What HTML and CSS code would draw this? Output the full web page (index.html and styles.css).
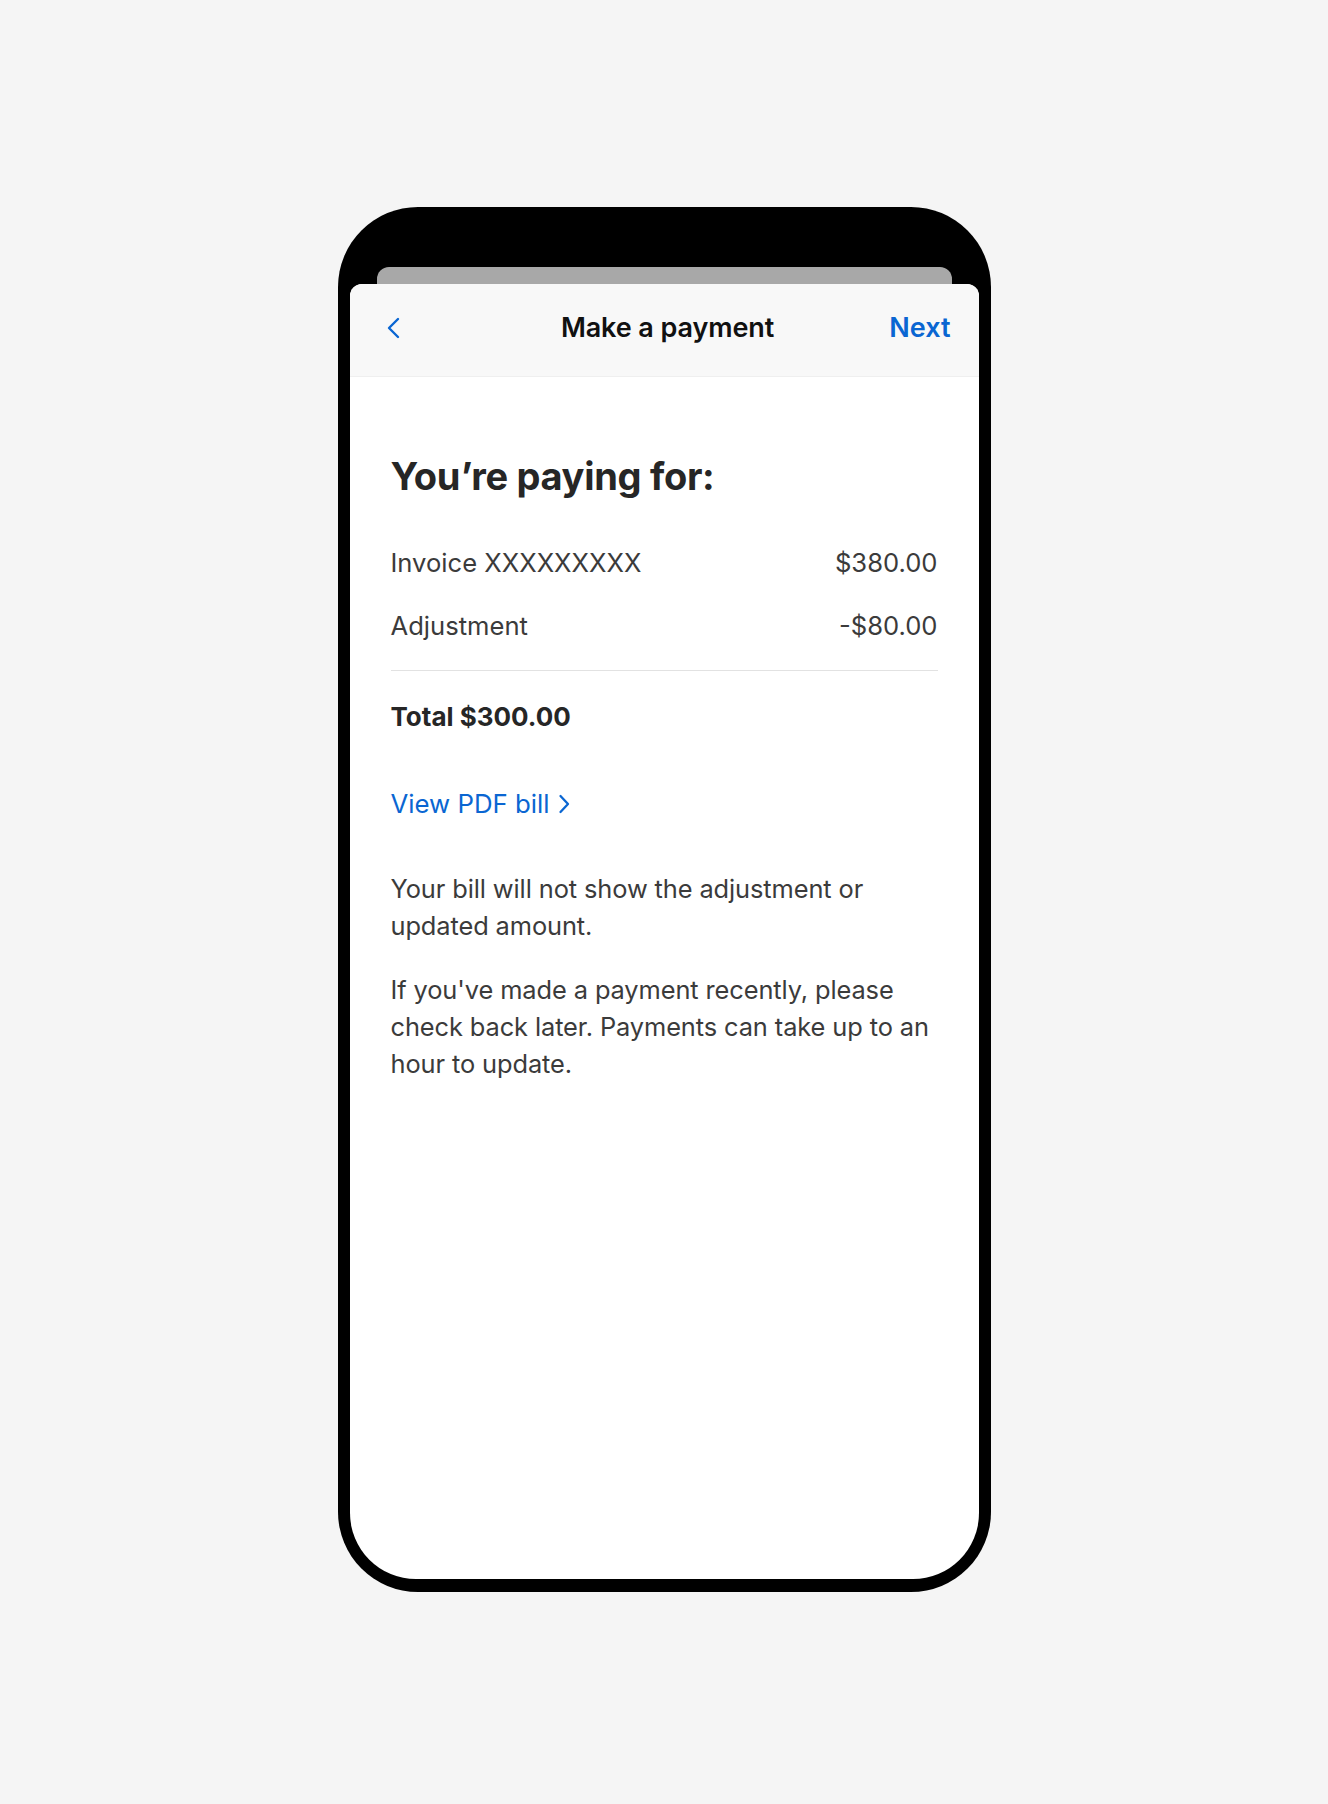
FILE: index.html
```html
<!DOCTYPE html>
<html lang="en">
<head>
<meta charset="utf-8">
<title>Make a payment</title>
<link rel="stylesheet" href="styles.css">
</head>
<body>
<div class="phone">
  <div class="under-sheet"></div>
  <div class="sheet">
    <header class="nav">
      <button class="back" aria-label="Back">
        <svg width="16" height="22" viewBox="0 0 16 22"><path d="M13 2 L4 11 L13 20" fill="none" stroke="#0a66d2" stroke-width="2.4" stroke-linecap="round" stroke-linejoin="round"/></svg>
      </button>
      <h1 class="nav-title">Make a payment</h1>
      <a class="nav-next" href="#">Next</a>
    </header>
    <main class="content">
      <h2 class="heading">You’re paying for:</h2>
      <div class="row"><span>Invoice XXXXXXXXX</span><span>$380.00</span></div>
      <div class="row row-second"><span>Adjustment</span><span>-$80.00</span></div>
      <hr class="divider">
      <div class="total">Total $300.00</div>
      <a class="pdf-link" href="#">View PDF bill
        <svg width="14" height="22" viewBox="0 0 14 22"><path d="M3.5 3 L11 11 L3.5 19" fill="none" stroke="#0a66d2" stroke-width="2.3" stroke-linecap="round" stroke-linejoin="round"/></svg>
      </a>
      <p class="note note-first">Your bill will not show the adjustment or updated amount.</p>
      <p class="note">If you've made a payment recently, please check back later. Payments can take up to an hour to update.</p>
    </main>
  </div>
</div>
</body>
</html>
```

FILE: styles.css
```css
* { box-sizing: border-box; }
html, body { margin: 0; padding: 0; }
body {
  background: #f5f5f5;
  font-family: Inter, "Noto Sans", sans-serif;
  height: 1804px;
  overflow: hidden;
}
.phone {
  width: 653px;
  height: 1385px;
  margin: 207px auto 0;
  background: #000;
  border-radius: 80px;
  padding: 60px 12px 13px;
  display: flex;
  flex-direction: column;
}
.under-sheet {
  height: 30px;
  margin: 0 27px -13px;
  background: #a8a8a8;
  border-radius: 12px 12px 0 0;
  flex: none;
}
.sheet {
  flex: 1;
  background: #fff;
  border-radius: 12px 12px 66px 66px;
  overflow: hidden;
  position: relative;
}
.nav {
  height: 93px;
  background: #f8f8f8;
  border-bottom: 1px solid #efefef;
  display: flex;
  align-items: center;
  justify-content: space-between;
  padding: 0 28px 5px 35px;
}
.back {
  background: none;
  border: 0;
  padding: 0;
  width: 80px;
  display: flex;
  align-items: center;
}
.nav-title {
  margin: 0;
  font-size: 27px;
  font-weight: 600;
  color: #111;
  letter-spacing: -0.1px;
}
.nav-next {
  width: 80px;
  text-align: right;
  font-size: 27px;
  font-weight: 600;
  color: #0a66d2;
  text-decoration: none;
}
.content {
  padding: 76px 41px 0;
  color: #3b3b3b;
}
.heading {
  margin: 0 0 49px;
  font-size: 38px;
  line-height: 46px;
  font-weight: 700;
  color: #262626;
  letter-spacing: -0.3px;
}
.row {
  display: flex;
  justify-content: space-between;
  font-size: 25.6px;
  line-height: 30px;
}
.row-second { margin-top: 33px; }
.divider {
  border: 0;
  border-top: 1px solid #e2e2e2;
  margin: 29px 0 31px;
}
.total {
  font-size: 26px;
  line-height: 30px;
  font-weight: 700;
  color: #262626;
}
.pdf-link {
  margin-top: 57px;
  display: inline-flex;
  align-items: center;
  gap: 7px;
  font-size: 25.8px;
  line-height: 30px;
  color: #0a66d2;
  text-decoration: none;
}
.note {
  margin: 27px 0 0;
  font-size: 25.4px;
  line-height: 37px;
  letter-spacing: -0.1px;
}
.note-first { margin-top: 51px; }
```
